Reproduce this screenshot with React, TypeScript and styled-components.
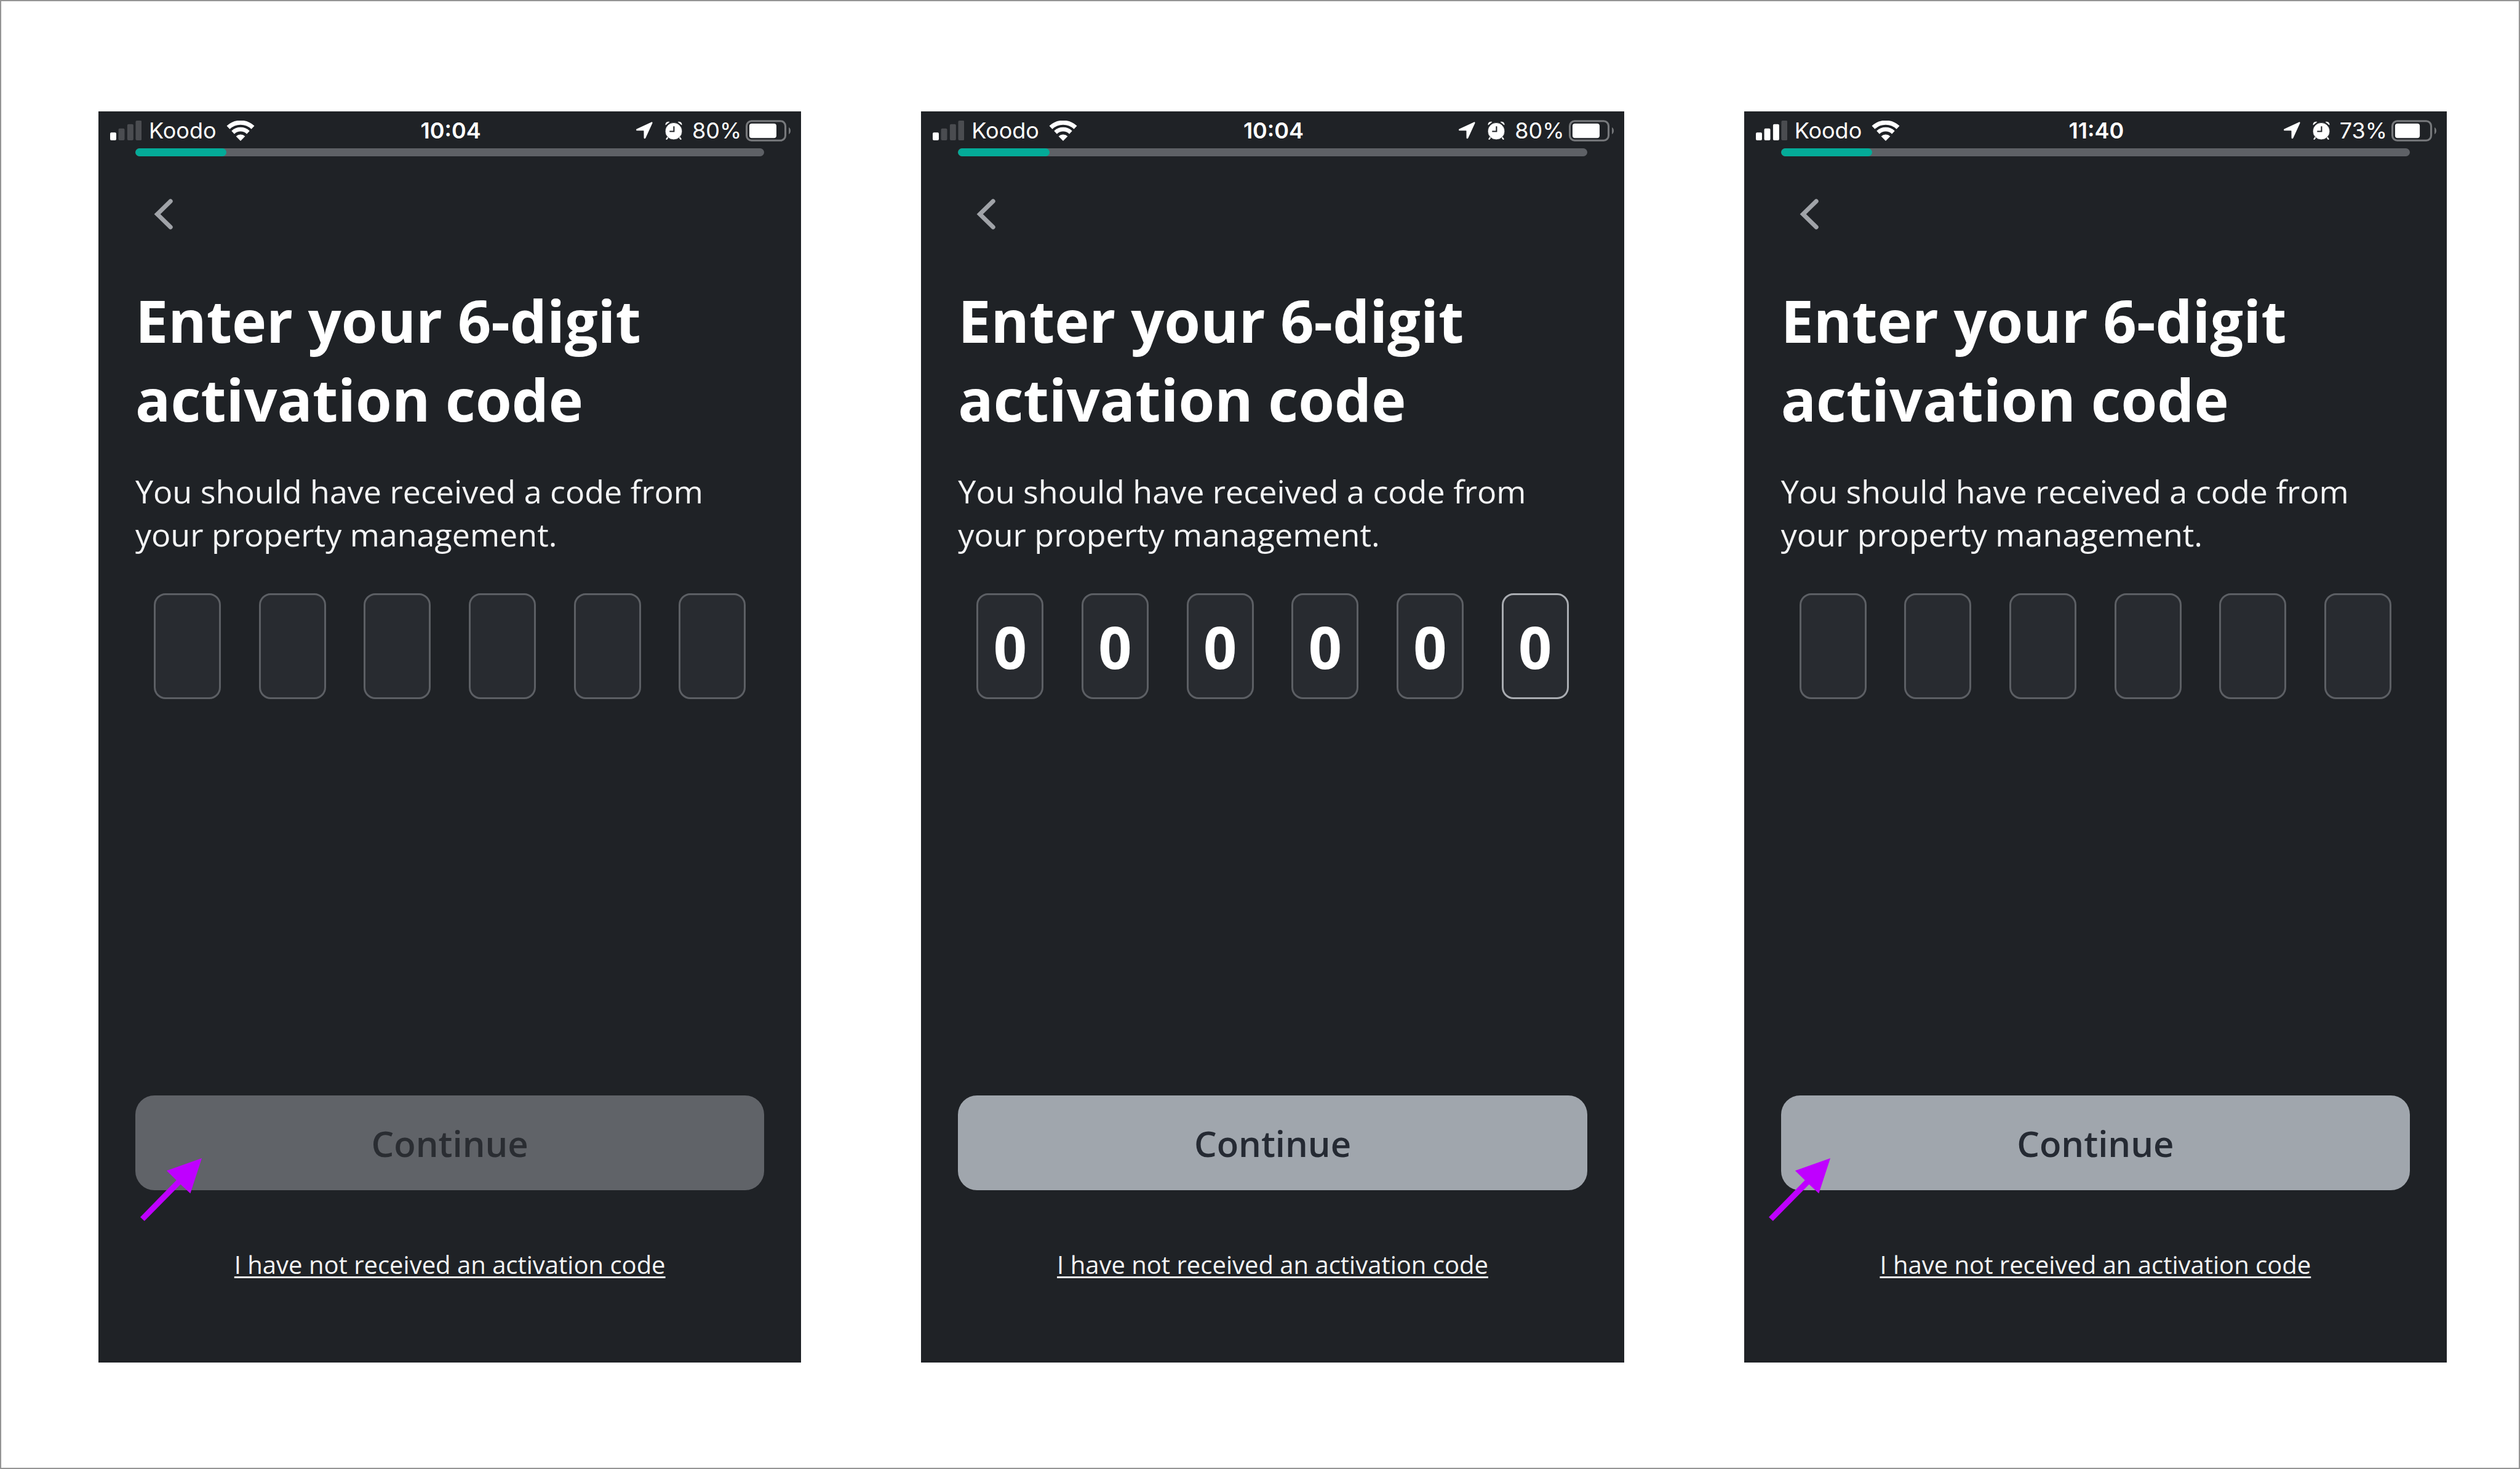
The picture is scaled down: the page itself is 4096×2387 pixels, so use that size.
import React, { useState } from "react";
import styled, { createGlobalStyle } from "styled-components";

const GlobalStyle = createGlobalStyle`
  *, *::before, *::after { box-sizing: border-box; }
  body { margin: 0; background: #ffffff; }
`;

const Board = styled.main`
  display: grid;
  grid-template-columns: repeat(3, minmax(0, 1fr));
  gap: 195px;
  min-height: 100vh;
  padding: 179px 117px 171px 158px;
  border: 2px solid #959595;
  background: #ffffff;
  font-family: "Open Sans", "Noto Sans", sans-serif;
`;

const Phone = styled.section`
  display: flex;
  flex-direction: column;
  padding: 0 60px 132px;
  background: #1f2226;
  color: #ffffff;
`;

const StatusBar = styled.header`
  display: grid;
  grid-template-columns: 1fr auto 1fr;
  align-items: center;
  height: 60px;
  margin: 0 -60px;
  padding: 2px 16px 0 19px;
  font-family: Inter, Roboto, sans-serif;
  font-size: 36px;
  line-height: 44px;
`;

const StatusGroup = styled.div<{ $end?: boolean }>`
  display: flex;
  align-items: center;
  justify-content: ${(p) => (p.$end ? "flex-end" : "flex-start")};
`;

const Carrier = styled.span`
  margin: 0 16px 0 12px;
`;

const Clock = styled.time`
  font-weight: 600;
`;

const Percent = styled.span`
  margin: 0 7px 0 16px;
`;

const Glyph = styled.svg<{ $gap?: number }>`
  display: block;
  flex: none;
  margin-right: ${(p) => p.$gap ?? 0}px;
`;

const Track = styled.div`
  height: 13px;
  border-radius: 7px;
  background: #5e6166;
  overflow: hidden;
`;

const TrackFill = styled.div`
  width: 14.5%;
  height: 100%;
  border-radius: 7px;
  background: #04ab98;
`;

const BackButton = styled.button`
  display: flex;
  align-items: center;
  justify-content: center;
  align-self: flex-start;
  width: 92px;
  height: 70px;
  margin: 59px 0 73px;
  padding: 0;
  border: 0;
  background: none;
  color: #a0a3a8;
`;

const Title = styled.h1`
  margin: 0;
  font-size: 95px;
  font-weight: 700;
  line-height: 128px;
`;

const Lead = styled.p`
  margin: 51px 0 61px;
  color: #f4f5f6;
  font-size: 52px;
  line-height: 70px;
`;

const CodeRow = styled.div`
  display: flex;
  justify-content: space-between;
  padding: 0 30px;
`;

const CodeBox = styled.input<{ $active: boolean }>`
  width: 109px;
  height: 172px;
  padding: 0;
  border: 3px solid ${(p) => (p.$active ? "#a9acb1" : "#5c5f64")};
  border-radius: 19px;
  outline: 0;
  background: #282b30;
  color: #ffffff;
  font: 700 95px "Open Sans", "Noto Sans", sans-serif;
  text-align: center;
`;

const Actions = styled.div`
  position: relative;
  display: flex;
  flex-direction: column;
  align-items: center;
  gap: 94px;
  margin-top: auto;
`;

const ContinueButton = styled.button`
  width: 100%;
  height: 154px;
  padding: 0;
  border: 0;
  border-radius: 31px;
  background: #a0a6ad;
  color: #252a33;
  font: 600 58px "Open Sans", "Noto Sans", sans-serif;

  &:disabled {
    background: #606368;
    color: #2a2d32;
  }
`;

const HelpLink = styled.a`
  color: #f4f5f6;
  font-size: 40px;
  line-height: 54px;
  text-decoration: underline;
  text-decoration-thickness: 3px;
  text-underline-offset: 4px;
  text-decoration-skip-ink: none;
`;

const Pointer = styled.svg<{ $left: number }>`
  position: absolute;
  top: 102px;
  left: ${(p) => p.$left}px;
  pointer-events: none;
`;

function Signal({ bars }: { bars: number }) {
  const shapes = [
    { x: 0, y: 24, h: 16 },
    { x: 17, y: 16, h: 24 },
    { x: 35, y: 7, h: 33 },
    { x: 52, y: 0, h: 40 },
  ];
  return (
    <Glyph width="51" height="32" viewBox="0 0 64 40" role="img" aria-label="Signal strength">
      {shapes.map((s, i) => (
        <rect key={s.x} x={s.x} y={s.y} width="12.5" height={s.h} rx="2.5" fill={i < bars ? "#ffffff" : "#4a4c50"} />
      ))}
    </Glyph>
  );
}

function Wifi() {
  return (
    <Glyph width="46" height="33" viewBox="0 0 58 42" fill="none" stroke="#ffffff" role="img" aria-label="Wi-Fi">
      <path d="M3.5 14.2A37 37 0 0 1 54.5 14.2" strokeWidth="9" />
      <path d="M13.2 24.4A23 23 0 0 1 44.8 24.4" strokeWidth="8.6" />
      <path d="M29 42 19.6 32.4A13.5 13.5 0 0 1 38.4 32.4Z" fill="#ffffff" stroke="none" />
    </Glyph>
  );
}

function Location() {
  return (
    <Glyph $gap={20} width="27" height="28" viewBox="0 0 34 35" fill="#ffffff" aria-hidden="true">
      <path d="M31.2.4 1.2 14.4C-.5 15.3-.2 17.8 1.9 17.8L15 17.9c.5 0 .7.2.7.7L15.8 32.2c0 2.3 2.6 2.8 3.6.8L33.2 2.6C33.9 1 32.7-.2 31.2.4Z" />
    </Glyph>
  );
}

function Alarm() {
  return (
    <Glyph width="28" height="30" viewBox="0 0 35 38" aria-hidden="true">
      <path d="M.8 8.2C-.6 4 3.2-.6 9.3 1.2ZM34.2 8.2C35.6 4 31.8-.6 25.7 1.2Z" fill="#ffffff" />
      <path d="M6.2 32 3 36.5M28.8 32 32 36.5" stroke="#ffffff" strokeWidth="3" strokeLinecap="round" />
      <circle cx="17.5" cy="20.5" r="17.5" fill="#ffffff" stroke="#1f2226" strokeWidth="1" />
      <path d="M18 10.5V21H9" fill="none" stroke="#1f2226" strokeWidth="2.6" />
    </Glyph>
  );
}

function Battery({ level }: { level: number }) {
  return (
    <Glyph width="74" height="35" viewBox="0 0 94 44" role="img" aria-label={`Battery ${level}%`}>
      <rect x="2" y="2" width="80" height="40" rx="10" fill="none" stroke="#77797c" strokeWidth="4" />
      <rect x="7.5" y="7" width={(level * 70) / 100} height="30" rx="5" fill="#ffffff" />
      <path d="M89 15c5 2 5 12 0 14Z" fill="#77797c" />
    </Glyph>
  );
}

type ScreenProps = {
  id: string;
  time: string;
  bars: number;
  battery: number;
  initialCode: string;
  disabled?: boolean;
  activeIndex?: number;
  pointerLeft?: number;
};

function ActivationScreen({ id, time, bars, battery, initialCode, disabled, activeIndex, pointerLeft }: ScreenProps) {
  const [digits, setDigits] = useState(() => Array.from({ length: 6 }, (_, i) => initialCode[i] ?? ""));
  const update = (index: number, value: string) =>
    setDigits((current) => current.map((d, i) => (i === index ? value.replace(/\D/g, "") : d)));

  return (
    <Phone aria-labelledby={id}>
      <StatusBar>
        <StatusGroup>
          <Signal bars={bars} />
          <Carrier>Koodo</Carrier>
          <Wifi />
        </StatusGroup>
        <Clock>{time}</Clock>
        <StatusGroup $end>
          <Location />
          <Alarm />
          <Percent>{battery}%</Percent>
          <Battery level={battery} />
        </StatusGroup>
      </StatusBar>
      <Track>
        <TrackFill />
      </Track>
      <BackButton type="button" aria-label="Back">
        <svg width="32" height="50" viewBox="0 0 40 63" fill="none" stroke="currentColor" strokeWidth="9" strokeLinecap="round" strokeLinejoin="miter">
          <path d="M34 5 7 31.5 34 58" />
        </svg>
      </BackButton>
      <Title id={id}>
        Enter your 6-digit
        <br />
        activation code
      </Title>
      <Lead>
        You should have received a code from
        <br />
        your property management.
      </Lead>
      <CodeRow role="group" aria-labelledby={id}>
        {digits.map((digit, i) => (
          <CodeBox
            key={i}
            type="text"
            inputMode="numeric"
            maxLength={1}
            aria-label={`Digit ${i + 1}`}
            value={digit}
            $active={i === activeIndex}
            onChange={(e) => update(i, e.target.value)}
          />
        ))}
      </CodeRow>
      <Actions>
        <ContinueButton type="button" disabled={disabled}>
          Continue
        </ContinueButton>
        <HelpLink href="#help">I have not received an activation code</HelpLink>
        {pointerLeft !== undefined && (
          <Pointer $left={pointerLeft} width="100" height="102" viewBox="0 0 126 128.5" aria-hidden="true">
            <path d="M126 0 102.5 72 82.5 53.5 8.5 128.5 0 120.5 74 45 54 25.5Z" fill="#bf00ff" />
          </Pointer>
        )}
      </Actions>
    </Phone>
  );
}

export default function App() {
  return (
    <>
      <GlobalStyle />
      <Board>
        <ActivationScreen id="step-empty" time="10:04" bars={1} battery={80} initialCode="" disabled pointerLeft={8} />
        <ActivationScreen id="step-filled" time="10:04" bars={1} battery={80} initialCode="000000" activeIndex={5} />
        <ActivationScreen id="step-enabled" time="11:40" bars={3} battery={73} initialCode="" pointerLeft={-20} />
      </Board>
    </>
  );
}
